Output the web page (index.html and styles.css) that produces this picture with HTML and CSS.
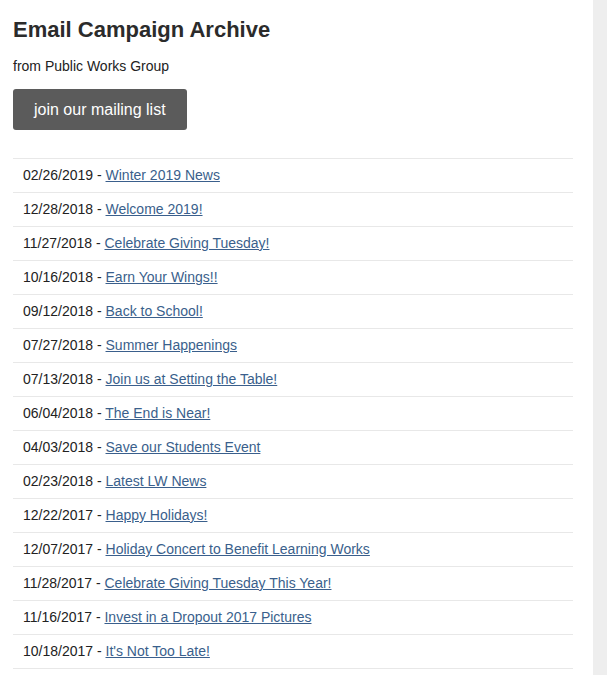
FILE: index.html
```html
<!DOCTYPE html>
<html>
<head>
<meta charset="utf-8">
<link rel="stylesheet" href="styles.css">
</head>
<body>
<div class="page">
  <main class="main">
    <h1 class="title">Email Campaign Archive</h1>
    <p class="from">from Public Works Group</p>
    <a class="join" href="#">join our mailing list</a>
    <ul class="list">
      <li>02/26/2019 - <a href="#">Winter 2019 News</a></li>
      <li>12/28/2018 - <a href="#">Welcome 2019!</a></li>
      <li>11/27/2018 - <a href="#">Celebrate Giving Tuesday!</a></li>
      <li>10/16/2018 - <a href="#">Earn Your Wings!!</a></li>
      <li>09/12/2018 - <a href="#">Back to School!</a></li>
      <li>07/27/2018 - <a href="#">Summer Happenings</a></li>
      <li>07/13/2018 - <a href="#">Join us at Setting the Table!</a></li>
      <li>06/04/2018 - <a href="#">The End is Near!</a></li>
      <li>04/03/2018 - <a href="#">Save our Students Event</a></li>
      <li>02/23/2018 - <a href="#">Latest LW News</a></li>
      <li>12/22/2017 - <a href="#">Happy Holidays!</a></li>
      <li>12/07/2017 - <a href="#">Holiday Concert to Benefit Learning Works</a></li>
      <li>11/28/2017 - <a href="#">Celebrate Giving Tuesday This Year!</a></li>
      <li>11/16/2017 - <a href="#">Invest in a Dropout 2017 Pictures</a></li>
      <li>10/18/2017 - <a href="#">It's Not Too Late!</a></li>
    </ul>
  </main>
  <aside class="side"></aside>
</div>
</body>
</html>
```
FILE: styles.css
```css
html, body {
  margin: 0;
  padding: 0;
  background: #fff;
}
body {
  font-family: "Liberation Sans", Arial, sans-serif;
  color: #222;
}
.page {
  display: flex;
  min-height: 675px;
}
.main {
  width: 560px;
  padding: 17px 20px 0 13px;
  flex: none;
}
.side {
  flex: 1;
  background: #eeeeee;
}
.title {
  margin: 0;
  font-size: 22px;
  line-height: 25px;
  font-weight: bold;
  color: #2b2b2b;
}
.from {
  margin: 16px 0 0;
  font-size: 14px;
  line-height: 17px;
  color: #222;
}
.join {
  display: inline-block;
  margin-top: 14px;
  background: #5b5b5b;
  color: #fff;
  text-decoration: none;
  font-size: 16px;
  line-height: 41px;
  padding: 0 21px;
  border-radius: 3px;
}
.list {
  list-style: none;
  margin: 28px 0 0;
  padding: 0;
  border-bottom: 1px solid #e8e8e8;
}
.list li {
  border-top: 1px solid #e8e8e8;
  padding: 8px 10px;
  font-size: 14px;
  line-height: 17px;
  color: #222;
}
.list a {
  color: #3a5f8c;
  text-decoration: underline;
}
```
